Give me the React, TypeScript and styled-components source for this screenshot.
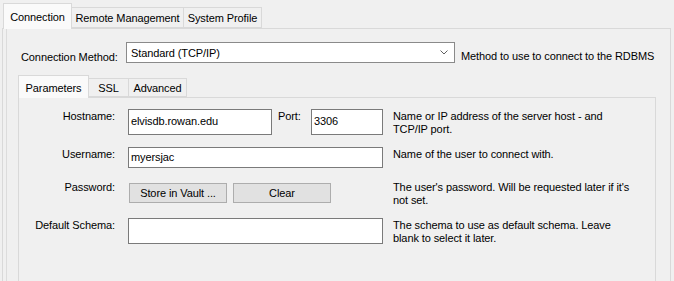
import React from 'react';
import styled, {createGlobalStyle} from 'styled-components';

const GlobalStyle = createGlobalStyle`
  html, body {
    margin: 0;
    padding: 0;
    background: #f0f0f0;
  }
  body {
    font-family: "Liberation Sans", Arial, sans-serif;
    font-size: 11px;
    letter-spacing: -0.1px;
    color: #000000;
  }
`;

const Window = styled.div`
  width: 674px;
  height: 281px;
  overflow: hidden;
  background: #f0f0f0;
`;

const TabStrip = styled.div<{ $height: number; $indent: number }>`
  display: flex;
  align-items: flex-end;
  height: ${p => p.$height}px;
  padding-left: ${p => p.$indent}px;
`;

const Tab = styled.div<{ $active?: boolean; $width: number; $height: number }>`
  position: relative;
  box-sizing: border-box;
  width: ${p => p.$width}px;
  height: ${p => p.$height}px;
  margin-left: -1px;
  margin-bottom: ${p => (p.$active ? -1 : 0)}px;
  z-index: ${p => (p.$active ? 1 : 0)};
  border: 1px solid #d9d9d9;
  border-bottom: ${p => (p.$active ? 'none' : '1px solid #d9d9d9')};
  background: ${p => (p.$active ? '#fafafa' : '#f0f0f0')};
  display: flex;
  align-items: center;
  justify-content: center;
  padding-top: 1px;
  line-height: 14px;
  white-space: nowrap;

  &:first-child {
    margin-left: 0;
  }
`;

const OuterPanel = styled.div`
  box-sizing: border-box;
  margin-left: 2px;
  width: 669px;
  height: 260px;
  border: 1px solid #d9d9d9;
  padding: 13px 0 0 15px;
  box-shadow: inset 3px 0 0 #f0f0f0, inset 4px 0 0 #dcdcdc;
`;

const MethodRow = styled.div`
  display: flex;
  align-items: flex-start;
  height: 21px;
  padding-left: 3px;
`;

const MethodLabel = styled.div`
  width: 105px;
  margin-top: 8px;
  line-height: 14px;
  white-space: nowrap;
`;

const Combo = styled.div`
  box-sizing: border-box;
  width: 329px;
  height: 21px;
  border: 1px solid #8a8a8a;
  background: #ffffff;
  display: flex;
  align-items: center;
  justify-content: space-between;
  padding: 0 6px 0 4px;
  line-height: 14px;
`;

const Hint = styled.div<{ $gap: number; $top: number }>`
  margin-left: ${p => p.$gap}px;
  margin-top: ${p => p.$top}px;
  line-height: 13px;
  white-space: nowrap;
`;

const InnerArea = styled.div`
  margin-top: 12px;
`;

const InnerPanel = styled.div`
  box-sizing: border-box;
  width: 638px;
  height: 200px;
  border: 1px solid #d9d9d9;
  padding-top: 11px;
`;

const FormRow = styled.div<{ $height: number }>`
  display: flex;
  align-items: flex-start;
  height: ${p => p.$height}px;
  margin-bottom: 12px;
`;

const FieldLabel = styled.div`
  width: 96px;
  margin-right: 13px;
  text-align: right;
  line-height: 14px;
  white-space: nowrap;
`;

const Controls = styled.div`
  width: 255px;
  display: flex;
  align-items: flex-start;
`;

const TextBox = styled.div<{ $width: number; $height: number }>`
  box-sizing: border-box;
  width: ${p => p.$width}px;
  height: ${p => p.$height}px;
  border: 1px solid #7a7a7a;
  background: #ffffff;
  padding: ${p => (p.$height > 22 ? 4 : 2)}px 2px 0;
  line-height: 14px;
  white-space: nowrap;
  overflow: hidden;
`;

const PortLabel = styled.div`
  width: 33px;
  margin-left: 6px;
  line-height: 14px;
`;

const PushButton = styled.div<{ $gap: number }>`
  box-sizing: border-box;
  width: 98px;
  height: 20px;
  margin-top: 3px;
  margin-left: ${p => p.$gap}px;
  border: 1px solid #adadad;
  background: #e1e1e1;
  display: flex;
  align-items: center;
  justify-content: center;
  line-height: 14px;
  white-space: nowrap;
`;

const Chevron = () => (
  <svg width="8" height="5" viewBox="0 0 8 5">
    <polyline points="0.5,0.5 4,4 7.5,0.5" fill="none" stroke="#606060" strokeWidth="1"/>
  </svg>
);

export default function App() {
  return (
    <>
      <GlobalStyle/>
      <Window>
        <TabStrip $height={28} $indent={3}>
          <Tab $active $width={69} $height={26}>Connection</Tab>
          <Tab $width={113} $height={21}>Remote Management</Tab>
          <Tab $width={79} $height={21}>System Profile</Tab>
        </TabStrip>
        <OuterPanel>
          <MethodRow>
            <MethodLabel>Connection Method:</MethodLabel>
            <Combo>
              <span>Standard (TCP/IP)</span>
              <Chevron/>
            </Combo>
            <Hint $gap={6} $top={8}>Method to use to connect to the RDBMS</Hint>
          </MethodRow>

          <InnerArea>
            <TabStrip $height={22} $indent={0}>
              <Tab $active $width={71} $height={23}>Parameters</Tab>
              <Tab $width={41} $height={19}>SSL</Tab>
              <Tab $width={59} $height={19}>Advanced</Tab>
            </TabStrip>
            <InnerPanel>
              <FormRow $height={26}>
                <FieldLabel>Hostname:</FieldLabel>
                <Controls>
                  <TextBox $width={144} $height={26}>elvisdb.rowan.edu</TextBox>
                  <PortLabel>Port:</PortLabel>
                  <TextBox $width={72} $height={26}>3306</TextBox>
                </Controls>
                <Hint $gap={10} $top={1}>Name or IP address of the server host - and<br/>TCP/IP port.</Hint>
              </FormRow>
              <FormRow $height={21}>
                <FieldLabel>Username:</FieldLabel>
                <Controls>
                  <TextBox $width={255} $height={21}>myersjac</TextBox>
                </Controls>
                <Hint $gap={10} $top={1}>Name of the user to connect with.</Hint>
              </FormRow>
              <FormRow $height={26}>
                <FieldLabel>Password:</FieldLabel>
                <Controls>
                  <PushButton $gap={1}>Store in Vault ...</PushButton>
                  <PushButton $gap={6}>Clear</PushButton>
                </Controls>
                <Hint $gap={10} $top={1}>The user's password. Will be requested later if it's<br/>not set.</Hint>
              </FormRow>
              <FormRow $height={26}>
                <FieldLabel>Default Schema:</FieldLabel>
                <Controls>
                  <TextBox $width={255} $height={26}></TextBox>
                </Controls>
                <Hint $gap={10} $top={1}>The schema to use as default schema. Leave<br/>blank to select it later.</Hint>
              </FormRow>
            </InnerPanel>
          </InnerArea>
        </OuterPanel>
      </Window>
    </>
  );
}
